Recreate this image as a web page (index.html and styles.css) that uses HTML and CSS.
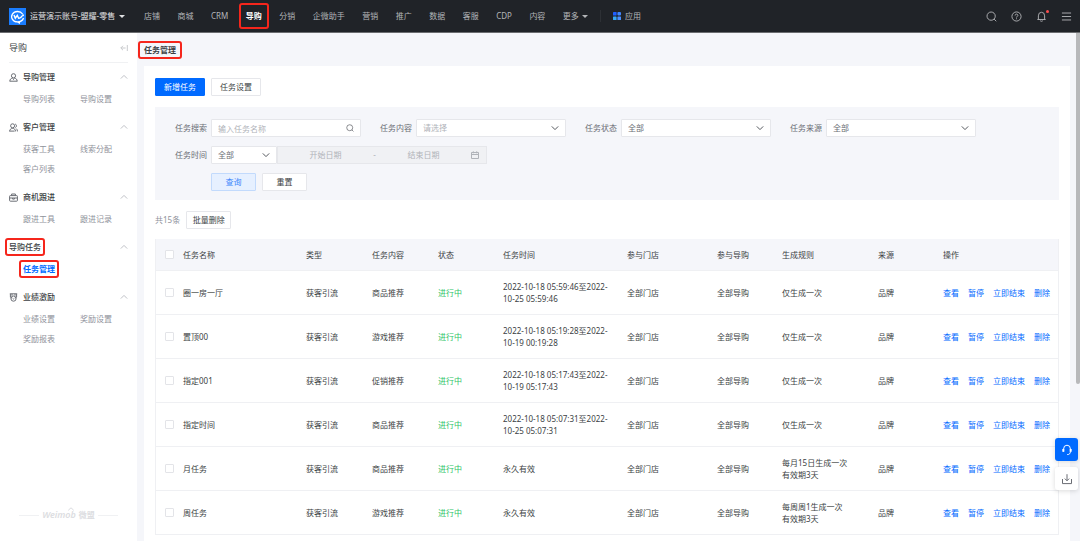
FILE: index.html
```
<!DOCTYPE html>
<html lang="zh-CN">
<head>
  <meta charset="UTF-8">
  <title>任务管理</title>
  <link rel="stylesheet" href="styles.css">
</head>
<body>
  <svg class="sprite" width="0" height="0" aria-hidden="true">
    <symbol id="down" viewBox="0 0 8 8"><path d="M.8 2.4 4 5.6l3.2-3.2"/></symbol>
    <symbol id="up" viewBox="0 0 8 8"><path d="M.8 5.6 4 2.4l3.2 3.2"/></symbol>
    <symbol id="search" viewBox="0 0 12 12"><circle cx="5.6" cy="5.6" r="4.5"/><path d="m8.8 8.8 2.4 2.4"/></symbol>
  </svg>

  <header class="topbar">
    <div class="account">
      <svg class="logo" viewBox="0 0 17 17">
        <rect width="17" height="17" fill="#1a7dff"/>
        <path d="M13.6 6A5.9 5.2 0 1 0 8.5 13.9c2.6 0 5.2-1.3 6-3.9M8 13.8l2.4 1.3.4-1.6" fill="none" stroke="#fff" stroke-width="1.3"/>
        <path d="m5 7 1.3 3.2L8.3 7.4l1.3 2.8c1.4.3 2.4-.4 3.6-2.3" fill="none" stroke="#fff" stroke-width="1.4"/>
        <circle cx="14" cy="7.2" r="1" fill="#fff"/>
      </svg>
      <span>运营演示账号-盟耀-零售</span>
      <i class="caret"></i>
    </div>
    <nav class="nav">
      <a href="#">店铺</a>
      <a href="#">商城</a>
      <a href="#">CRM</a>
      <a href="#" class="active mark mark-lg">导购</a>
      <a href="#">分销</a>
      <a href="#">企微助手</a>
      <a href="#">营销</a>
      <a href="#">推广</a>
      <a href="#">数据</a>
      <a href="#">客服</a>
      <a href="#">CDP</a>
      <a href="#">内容</a>
      <a href="#" class="more">更多<i class="caret"></i></a>
    </nav>
    <a href="#" class="apps">
      <svg width="8" height="8" viewBox="0 0 8 8">
        <rect width="3.6" height="3.6" rx=".6" fill="#1f5fff"/>
        <rect x="4.4" width="3.6" height="3.6" rx="1" fill="#3f86ff"/>
        <rect y="4.4" width="3.6" height="3.6" rx=".6" fill="#35a8f5"/>
        <rect x="4.4" y="4.4" width="3.6" height="3.6" rx=".6" fill="#4b8fff"/>
      </svg>
      应用
    </a>
    <div class="tools">
      <button aria-label="搜索"><svg class="icon"><use href="#search"/></svg></button>
      <button aria-label="帮助"><svg class="icon" viewBox="0 0 12 12"><circle cx="6" cy="6" r="5"/><path d="M4.5 4.9C4.5 2.8 7.6 3 7.5 4.9 7.4 5.9 6 5.9 6 7.1M6 8v1"/></svg></button>
      <button aria-label="通知" class="bell"><svg class="icon" viewBox="0 0 12 12"><path d="M1.5 9.3h9M2.6 9.2V5.3a3.4 3.9 0 0 1 6.8 0v3.9M4.6 10.7q1.4 1 2.8 0"/></svg></button>
      <button aria-label="菜单"><svg class="icon" viewBox="0 0 12 12"><path d="M1 2.2h10M1 6h10M1 9.8h10"/></svg></button>
    </div>
  </header>

  <div class="layout">
    <aside class="sidebar">
      <div class="side-title">
        <span>导购</span>
        <svg class="icon" viewBox="0 0 8 8"><path d="M5.6 4H.8M3 1.8.8 4 3 6.2M7.3 1v6"/></svg>
      </div>

      <section class="group">
        <h2>
          <svg class="icon" viewBox="0 0 9 9"><circle cx="4.5" cy="2.8" r="2.1"/><path d="M.8 8.4c0-2.3 1.4-3.2 3-3.2M8.2 8.4c0-2.3-1.4-3.2-3-3.2M.8 8.2h7.4M4.5 5.6v1.2"/></svg>
          导购管理
          <svg class="icon fold"><use href="#up"/></svg>
        </h2>
        <div class="links">
          <a href="#">导购列表</a>
          <a href="#">导购设置</a>
        </div>
      </section>

      <section class="group">
        <h2>
          <svg class="icon" viewBox="0 0 9 9"><circle cx="3.6" cy="2.8" r="2"/><path d="M.6 8.4c0-4 6-4 6 0M.6 8.1h5M6.2 1a2 2 0 0 1 .2 3.6M7.2 5.6q1.2.8 1.3 2.8"/></svg>
          客户管理
          <svg class="icon fold"><use href="#up"/></svg>
        </h2>
        <div class="links">
          <a href="#">获客工具</a>
          <a href="#">线索分配</a>
          <a href="#">客户列表</a>
        </div>
      </section>

      <section class="group">
        <h2>
          <svg class="icon" viewBox="0 0 9 9"><rect x=".6" y="2.6" width="7.8" height="5.6" rx=".7"/><path d="M2.6 2.6V1h3.8v1.6M.6 5h7.8M3.6 5v1.1h1.8V5"/></svg>
          商机跟进
          <svg class="icon fold"><use href="#up"/></svg>
        </h2>
        <div class="links">
          <a href="#">跟进工具</a>
          <a href="#">跟进记录</a>
        </div>
      </section>

      <section class="group">
        <h2>
          <span class="mark">导购任务</span>
          <svg class="icon fold"><use href="#up"/></svg>
        </h2>
        <div class="links">
          <a href="#" class="current mark">任务管理</a>
        </div>
      </section>

      <section class="group">
        <h2>
          <svg class="icon" viewBox="0 0 9 9"><path d="M.8.8h7.4M1.4 1v3.2L3 5.2M7.6 1v3.2L6 5.2M3 .8v2M6 .8v2"/><circle cx="4.5" cy="5.6" r="2.6"/><path d="M3.6 5.2q.9 1.6 1.8 0"/></svg>
          业绩激励
          <svg class="icon fold"><use href="#up"/></svg>
        </h2>
        <div class="links">
          <a href="#">业绩设置</a>
          <a href="#">奖励设置</a>
          <a href="#">奖励报表</a>
        </div>
      </section>

      <div class="brand">
        <em>Weimob<svg class="icon" viewBox="0 0 8 8"><path d="M1.5 6.5Q4 1.5 6.5 6.5"/></svg></em>
        <b>微盟</b>
      </div>
    </aside>

    <main class="main">
      <h1><span class="mark">任务管理</span></h1>

      <div class="card">
        <div class="actions">
          <button class="btn primary">新增任务</button>
          <button class="btn">任务设置</button>
        </div>

        <form class="filters">
          <div class="field">
            <label for="keyword">任务搜索</label>
            <div class="control">
              <input type="text" id="keyword" placeholder="输入任务名称">
              <svg class="icon"><use href="#search"/></svg>
            </div>
          </div>
          <div class="field">
            <label for="content">任务内容</label>
            <div class="control">
              <select id="content" class="empty"><option>请选择</option></select>
              <svg class="icon"><use href="#down"/></svg>
            </div>
          </div>
          <div class="field">
            <label for="status">任务状态</label>
            <div class="control">
              <select id="status"><option>全部</option></select>
              <svg class="icon"><use href="#down"/></svg>
            </div>
          </div>
          <div class="field">
            <label for="source">任务来源</label>
            <div class="control">
              <select id="source"><option>全部</option></select>
              <svg class="icon"><use href="#down"/></svg>
            </div>
          </div>
          <div class="field wide">
            <label for="time">任务时间</label>
            <div class="control short">
              <select id="time"><option>全部</option></select>
              <svg class="icon"><use href="#down"/></svg>
            </div>
            <div class="range">
              <input type="text" placeholder="开始日期" aria-label="开始日期" disabled>
              <span>-</span>
              <input type="text" placeholder="结束日期" aria-label="结束日期" disabled>
              <svg class="icon" viewBox="0 0 8 8"><path d="M.5 1.5h7v6h-7zM.5 3.5h7M2.3.3v2M5.7.3v2"/></svg>
            </div>
          </div>
          <div class="submit">
            <button type="button" class="btn small query">查询</button>
            <button type="reset" class="btn small">重置</button>
          </div>
        </form>

        <div class="batch">
          <span>共15条</span>
          <button class="btn small">批量删除</button>
        </div>

        <table>
          <colgroup>
            <col class="c-check"><col class="c-name"><col class="c-sm"><col class="c-sm"><col class="c-xs"><col class="c-time">
            <col class="c-store"><col class="c-xs"><col class="c-rule"><col class="c-xs"><col class="c-ops">
          </colgroup>
          <thead>
            <tr>
              <th><input type="checkbox" aria-label="全选"></th>
              <th>任务名称</th>
              <th>类型</th>
              <th>任务内容</th>
              <th>状态</th>
              <th>任务时间</th>
              <th>参与门店</th>
              <th>参与导购</th>
              <th>生成规则</th>
              <th>来源</th>
              <th>操作</th>
            </tr>
          </thead>
          <tbody>
            <tr>
              <td><input type="checkbox" aria-label="选择"></td>
              <td>圈一房一厅</td>
              <td>获客引流</td>
              <td>商品推荐</td>
              <td class="running">进行中</td>
              <td>2022-10-18 05:59:46至2022-<br>10-25 05:59:46</td>
              <td>全部门店</td>
              <td>全部导购</td>
              <td>仅生成一次</td>
              <td>品牌</td>
              <td class="ops"><a href="#">查看</a><a href="#">暂停</a><a href="#">立即结束</a><a href="#">删除</a></td>
            </tr>
            <tr>
              <td><input type="checkbox" aria-label="选择"></td>
              <td>置顶00</td>
              <td>获客引流</td>
              <td>游戏推荐</td>
              <td class="running">进行中</td>
              <td>2022-10-18 05:19:28至2022-<br>10-19 00:19:28</td>
              <td>全部门店</td>
              <td>全部导购</td>
              <td>仅生成一次</td>
              <td>品牌</td>
              <td class="ops"><a href="#">查看</a><a href="#">暂停</a><a href="#">立即结束</a><a href="#">删除</a></td>
            </tr>
            <tr>
              <td><input type="checkbox" aria-label="选择"></td>
              <td>指定001</td>
              <td>获客引流</td>
              <td>促销推荐</td>
              <td class="running">进行中</td>
              <td>2022-10-18 05:17:43至2022-<br>10-19 05:17:43</td>
              <td>全部门店</td>
              <td>全部导购</td>
              <td>仅生成一次</td>
              <td>品牌</td>
              <td class="ops"><a href="#">查看</a><a href="#">暂停</a><a href="#">立即结束</a><a href="#">删除</a></td>
            </tr>
            <tr>
              <td><input type="checkbox" aria-label="选择"></td>
              <td>指定时间</td>
              <td>获客引流</td>
              <td>商品推荐</td>
              <td class="running">进行中</td>
              <td>2022-10-18 05:07:31至2022-<br>10-25 05:07:31</td>
              <td>全部门店</td>
              <td>全部导购</td>
              <td>仅生成一次</td>
              <td>品牌</td>
              <td class="ops"><a href="#">查看</a><a href="#">暂停</a><a href="#">立即结束</a><a href="#">删除</a></td>
            </tr>
            <tr>
              <td><input type="checkbox" aria-label="选择"></td>
              <td>月任务</td>
              <td>获客引流</td>
              <td>商品推荐</td>
              <td class="running">进行中</td>
              <td>永久有效</td>
              <td>全部门店</td>
              <td>全部导购</td>
              <td>每月15日生成一次<br>有效期3天</td>
              <td>品牌</td>
              <td class="ops"><a href="#">查看</a><a href="#">暂停</a><a href="#">立即结束</a><a href="#">删除</a></td>
            </tr>
            <tr>
              <td><input type="checkbox" aria-label="选择"></td>
              <td>周任务</td>
              <td>获客引流</td>
              <td>游戏推荐</td>
              <td class="running">进行中</td>
              <td>永久有效</td>
              <td>全部门店</td>
              <td>全部导购</td>
              <td>每周周1生成一次<br>有效期3天</td>
              <td>品牌</td>
              <td class="ops"><a href="#">查看</a><a href="#">暂停</a><a href="#">立即结束</a><a href="#">删除</a></td>
            </tr>
          </tbody>
        </table>
      </div>
    </main>
    <div class="scrollbar"></div>
  </div>

  <div class="float">
    <button class="service" aria-label="客服"><svg class="icon" viewBox="0 0 12 12"><path d="M2.6 7.6V5a3.4 3.8 0 0 1 6.8 0v2.6c0 1.8-1 3-3.2 3"/><path class="ear" d="M2.3 5v2.8M9.7 5v2.8"/></svg></button>
    <button aria-label="下载"><svg class="icon" viewBox="0 0 12 12"><path d="M1.5 6v4.6h9V6M6 1.2v6.4M3.8 5.6 6 7.8l2.2-2.2"/></svg></button>
  </div>
</body>
</html>
```

FILE: styles.css
```
* {
  box-sizing: border-box;
}

body {
  margin: 0;
  height: 100vh;
  display: flex;
  flex-direction: column;
  overflow: hidden;
  background: #f5f6fa;
  color: #3c3f44;
  font-family: "Noto Sans", "Noto Sans CJK SC", sans-serif;
  font-size: 8px;
  line-height: 12px;
}

a {
  color: inherit;
  text-decoration: none;
}

button, input, select {
  font: inherit;
  color: inherit;
}

button {
  padding: 0;
  border: none;
  background: none;
  cursor: pointer;
}

.sprite {
  position: absolute;
}

.icon {
  display: block;
  flex: none;
  width: 8px;
  height: 8px;
  fill: none;
  stroke: currentColor;
}

/* red highlight frame */
.mark {
  position: relative;
}

.mark::after {
  content: "";
  position: absolute;
  inset: -3px -6px;
  border: 2px solid #f5261c;
  border-radius: 3px;
}

.sidebar .mark::after {
  inset: -3px -4px;
}

.mark-lg::after {
  inset: -7px;
}

/* top bar */
.topbar {
  flex: none;
  display: flex;
  align-items: center;
  height: 33px;
  background: #202328;
  border-bottom: 1px solid #6b6d70;
  color: #b3b5b8;
}

.account {
  display: flex;
  align-items: center;
  gap: 4px;
  width: 144px;
  padding-left: 9px;
  color: #e0e1e3;
  white-space: nowrap;
}

.logo {
  width: 17px;
  height: 17px;
}

.caret {
  border: 3px solid transparent;
  border-top-color: currentColor;
  border-bottom: none;
}

.nav {
  display: flex;
  justify-content: space-between;
  width: 444px;
  white-space: nowrap;
}

.nav .active {
  color: #fff;
  font-weight: bold;
}

.more {
  display: flex;
  align-items: center;
  gap: 3px;
}

.apps {
  display: flex;
  align-items: center;
  gap: 4px;
  margin-left: 12px;
  padding-left: 12px;
  border-left: 1px solid #2d3035;
}

.tools {
  display: flex;
  gap: 14px;
  margin-left: auto;
  padding-right: 8px;
}

.tools .icon {
  width: 11px;
  height: 11px;
}

.bell {
  position: relative;
}

.bell::after {
  content: "";
  position: absolute;
  top: -1px;
  right: -2px;
  width: 3px;
  height: 3px;
  border-radius: 50%;
  background: #ff4d4f;
}

.layout {
  flex: 1;
  display: flex;
  min-height: 0;
  position: relative;
}

/* sidebar */
.sidebar {
  flex: none;
  display: flex;
  flex-direction: column;
  width: 137px;
  padding: 0 9px 20px;
  background: #fff;
}

.side-title {
  display: flex;
  align-items: center;
  justify-content: space-between;
  height: 30px;
  margin-bottom: 4px;
  border-bottom: 1px solid #f0f1f3;
  font-size: 9px;
}

.side-title .icon {
  color: #c8cacd;
}

.group {
  margin-bottom: 8px;
}

.group h2 {
  display: flex;
  align-items: center;
  gap: 5px;
  height: 20px;
  margin: 0 0 2px;
  font-size: 8px;
  font-weight: 500;
}

.group h2 .icon {
  width: 9px;
  height: 9px;
  color: #6b6e75;
}

.group h2 .fold {
  width: 8px;
  height: 8px;
  margin-left: auto;
  color: #bfc1c6;
}

.links {
  display: grid;
  grid-template-columns: 57px 1fr;
  padding-left: 14px;
  justify-items: start;
  color: #8f929b;
}

.links a {
  margin: 4px 0;
}

.links .current {
  color: #006aff;
  font-weight: bold;
}

.brand {
  display: flex;
  align-items: center;
  gap: 3px;
  margin: auto 10px 0;
  color: #dcdde1;
  white-space: nowrap;
}

.brand::before, .brand::after {
  content: "";
  flex: 1;
  height: 1px;
  background: #f0f1f3;
}

.brand em {
  position: relative;
  font-weight: 600;
  font-size: 9px;
}

.brand .icon {
  position: absolute;
  top: -5px;
  right: 1px;
}

/* content */
.main {
  flex: 1;
  display: flex;
  flex-direction: column;
  min-width: 0;
  padding: 0 10px 0 7px;
}

h1 {
  flex: none;
  display: flex;
  align-items: center;
  height: 33px;
  margin: 0;
  font-size: 8px;
  font-weight: 600;
}

.card {
  flex: 1;
  min-height: 0;
  padding: 12px 11px 0;
  background: #fff;
}

.actions {
  display: flex;
  gap: 6px;
  margin-bottom: 11px;
}

.btn {
  width: 50px;
  height: 18px;
  border: 1px solid #e6e7eb;
  border-radius: 1px;
  background: #fff;
}

.btn.small {
  width: 45px;
}

.btn.primary {
  background: #006aff;
  border-color: #006aff;
  color: #fff;
}

.btn.query {
  background: #e6f0ff;
  border-color: #c2dafc;
  color: #3d86fb;
}

.filters {
  display: flex;
  flex-wrap: wrap;
  gap: 9px 19px;
  padding: 12px 20px 9px;
  background: #f5f6fa;
}

.field {
  display: flex;
  align-items: center;
  color: #6a6d74;
}

.field label {
  width: 36px;
}

.field.wide {
  width: 100%;
}

.control {
  position: relative;
  width: 150px;
}

.control.short {
  width: 66px;
}

.control input, .control select {
  display: block;
  width: 100%;
  height: 18px;
  padding: 0 6px;
  border: 1px solid #e6e7eb;
  border-radius: 1px;
  background: #fff;
  appearance: none;
  outline: none;
}

.control .icon {
  position: absolute;
  top: 5px;
  right: 7px;
  color: #55585e;
  pointer-events: none;
}

::placeholder, .control .empty {
  color: #b0b3b9;
}

.range {
  display: flex;
  align-items: center;
  width: 210px;
  height: 18px;
  padding-right: 7px;
  border: 1px solid #e6e7eb;
  background: #f0f1f4;
  color: #b0b3b9;
}

.range input {
  flex: 1;
  min-width: 0;
  padding: 0;
  border: none;
  background: none;
  text-align: center;
}

.submit {
  display: flex;
  gap: 6px;
  width: 100%;
  padding-left: 36px;
}

.batch {
  display: flex;
  align-items: center;
  gap: 6px;
  margin: 11px 0 10px;
  color: #8f929b;
}

.batch .btn {
  color: #3c3f44;
}

table {
  width: 100%;
  table-layout: fixed;
  border-collapse: separate;
  border-spacing: 0;
}

.c-check { width: 20px; }
.c-name { width: 123px; }
.c-sm { width: 66px; }
.c-xs { width: 65px; }
.c-time { width: 124px; }
.c-store { width: 90px; }
.c-rule { width: 96px; }
.c-ops { width: 124px; }

th, td {
  height: 44px;
  padding: 0 8px;
  border-bottom: 1px solid #eff0f3;
  text-align: left;
  font-weight: 400;
}

th {
  height: 32px;
  background: #f5f6fa;
}

th:first-child, td:first-child {
  padding: 0 0 0 9px;
  border-left: 1px solid #eff0f3;
}

th:last-child, td:last-child {
  padding-right: 0;
  border-right: 1px solid #eff0f3;
}

input[type="checkbox"] {
  display: block;
  width: 9px;
  height: 9px;
  margin: 0;
  border: 1px solid #e3e4e8;
  border-radius: 1px;
  background: #fff;
  appearance: none;
}

.running {
  color: #2fc468;
}

.ops {
  color: #006aff;
  white-space: nowrap;
}

.ops a {
  margin-right: 9px;
}

.scrollbar {
  position: absolute;
  top: 0;
  right: 0;
  width: 4px;
  height: 69%;
  border-radius: 0 0 2px 2px;
  background: #b8b9bb;
}

.float {
  position: fixed;
  right: 2px;
  bottom: 51px;
  display: grid;
  gap: 6px;
}

.float button {
  display: grid;
  place-items: center;
  width: 23px;
  height: 23px;
  border-radius: 3px;
  background: #fff;
  box-shadow: 0 1px 5px rgba(0, 0, 0, 0.15);
  color: #6a6d74;
}

.float .service {
  background: #006aff;
  color: #fff;
}

.float .icon {
  width: 12px;
  height: 12px;
}

.ear {
  stroke-width: 2;
}
```
